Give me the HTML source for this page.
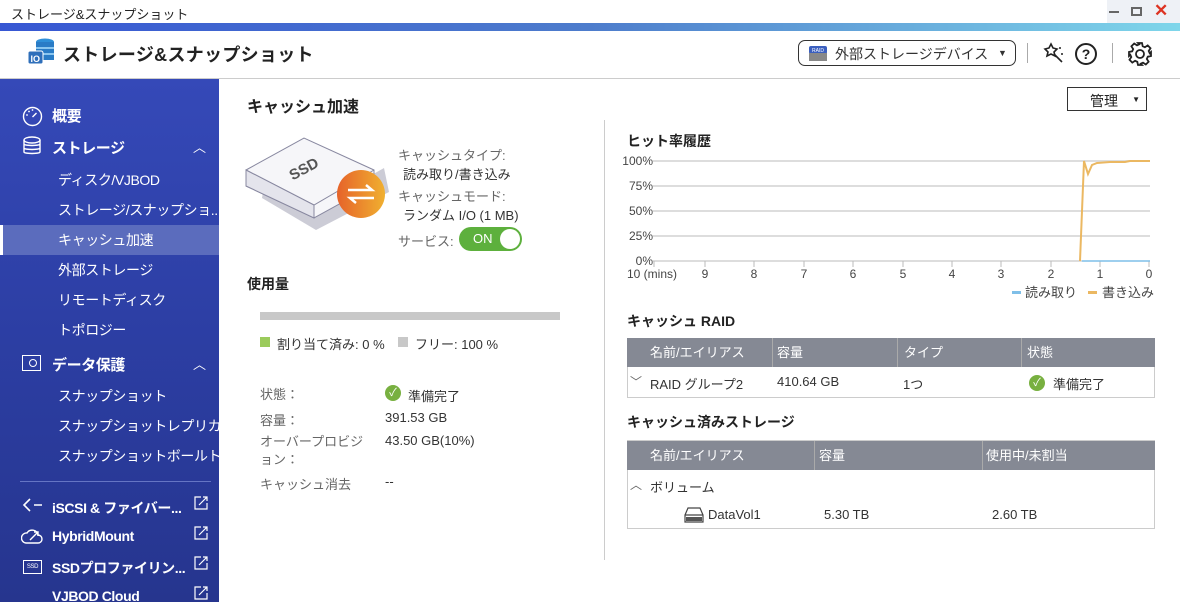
<!DOCTYPE html>
<html><head><meta charset="utf-8"><style>
*{margin:0;padding:0;box-sizing:border-box}
body{width:1180px;height:602px;overflow:hidden;background:#fff;font-family:"Liberation Sans","Noto Sans CJK JP",sans-serif;color:#222;position:relative}
.a{position:absolute;white-space:nowrap}
.side{position:absolute;left:0;top:79px;width:219px;height:523px;overflow:hidden;background:linear-gradient(180deg,#3549b8 0%,#2c3ea3 50%,#26358e 100%)}
.side .a{color:#fff;font-size:14px;letter-spacing:-0.4px}
.b{font-weight:bold;font-size:15px!important}
.th{position:absolute;background:#858994;color:#fff;font-size:13px;height:29px;line-height:29px}
.sm{font-size:13px;color:#333}
.g{color:#666}
</style></head><body>
<!-- title bar -->
<div class="a" style="left:0;top:0;width:1180px;height:23px;background:#fff"></div>
<div class="a" style="left:1107px;top:0;width:73px;height:23px;background:#eef1f6"></div>
<div class="a" style="left:11px;top:4px;font-size:13px;color:#222">ストレージ&amp;スナップショット</div>
<div class="a" style="left:1109px;top:11px;width:10px;height:2px;background:#666"></div>
<div class="a" style="left:1131px;top:7px;width:11px;height:9px;border:2px solid #666"></div>
<div class="a" style="left:1154px;top:1px;font-size:17px;color:#d32;font-weight:bold">✕</div>
<div class="a" style="left:0;top:23px;width:1180px;height:8px;background:linear-gradient(90deg,#3757d3,#4d7ccc 50%,#7fd6ea)"></div>
<!-- header -->
<div class="a" style="left:0;top:78px;width:1180px;height:1px;background:#ccc"></div>
<svg class="a" style="left:26px;top:37px" width="30" height="30" viewBox="0 0 30 30"><ellipse cx="19" cy="5" rx="9" ry="3.5" fill="#2f8fd8"/><rect x="10" y="5" width="18" height="18" fill="#2a7cc6"/><rect x="10" y="10" width="18" height="2" fill="#8bc6ef"/><rect x="10" y="16" width="18" height="2" fill="#8bc6ef"/><rect x="2" y="14" width="15" height="13" rx="2" fill="#2f6fba" stroke="#fff"/><text x="4.5" y="25" font-size="9" fill="#fff" font-family="Liberation Sans" font-weight="bold">IO</text></svg>
<div class="a" style="left:63px;top:41px;font-size:18px;color:#222;font-weight:bold;letter-spacing:.3px">ストレージ&amp;スナップショット</div>
<div class="a" style="left:798px;top:40px;width:218px;height:26px;border:1px solid #333;border-radius:7px"></div>
<svg class="a" style="left:808px;top:45px" width="20" height="17"><rect x="1" y="1" width="18" height="8" rx="2" fill="#3b5fbf"/><rect x="1" y="8" width="18" height="8" fill="#888"/><text x="4" y="7" font-size="5" fill="#fff">RAID</text></svg>
<div class="a" style="left:835px;top:44px;font-size:14px;color:#333">外部ストレージデバイス</div>
<div class="a" style="left:998px;top:48px;font-size:9px;color:#333">▼</div>
<div class="a" style="left:1027px;top:43px;width:1px;height:20px;background:#aaa"></div>
<svg class="a" style="left:1042px;top:42px" width="24" height="24"><g fill="none" stroke="#222" stroke-width="1.6"><path d="M9 2l2 4 4 1-3 3 1 4-4-2-4 2 1-4-3-3 4-1z"/><path d="M12 12l8 8"/></g><circle cx="18" cy="6" r="1" fill="#222"/><circle cx="20" cy="12" r="1" fill="#222"/></svg>
<div class="a" style="left:1075px;top:43px;width:22px;height:22px;border:2px solid #222;border-radius:50%;text-align:center;font-size:14px;font-weight:bold;line-height:18px">?</div>
<div class="a" style="left:1112px;top:43px;width:1px;height:20px;background:#aaa"></div>
<svg class="a" style="left:1127px;top:41px" width="26" height="26" viewBox="0 0 26 26"><g fill="none" stroke="#222" stroke-width="1.8"><path d="M11 2h4l.7 3.2 2.2 1 2.8-1.8 2.8 2.8-1.8 2.8 1 2.2L24 11v4l-3.2.7-1 2.2 1.8 2.8-2.8 2.8-2.8-1.8-2.2 1L15 24h-4l-.7-3.2-2.2-1-2.8 1.8-2.8-2.8 1.8-2.8-1-2.2L2 15v-4l3.2-.7 1-2.2-1.8-2.8 2.8-2.8 2.8 1.8 2.2-1z"/><circle cx="13" cy="13" r="4"/></g></svg>
<!-- sidebar -->
<div class="side">
<div class="a" style="left:0;top:146px;width:219px;height:30px;background:#5b6cbd"></div>
<div class="a" style="left:0;top:146px;width:3px;height:30px;background:#fff"></div>
<svg class="a" style="left:22px;top:27px" width="21" height="21"><g fill="none" stroke="#fff" stroke-width="1.4"><circle cx="10.5" cy="10.5" r="9"/><path d="M10.5 11l4-4"/></g><circle cx="5" cy="9" r=".9" fill="#fff"/><circle cx="7" cy="5.5" r=".9" fill="#fff"/><circle cx="10.5" cy="4" r=".9" fill="#fff"/></svg>
<div class="a b" style="left:52px;top:26px">概要</div>
<svg class="a" style="left:22px;top:57px" width="20" height="20"><g fill="none" stroke="#fff" stroke-width="1.4"><ellipse cx="10" cy="4" rx="8" ry="3"/><path d="M2 4v12c0 2 16 2 16 0V4M2 8c0 2 16 2 16 0M2 12c0 2 16 2 16 0"/></g></svg>
<div class="a b" style="left:52px;top:58px">ストレージ</div>
<div class="a" style="left:193px;top:58px;font-size:13px!important">︿</div>
<div class="a" style="left:58px;top:91px">ディスク/VJBOD</div>
<div class="a" style="left:58px;top:121px">ストレージ/スナップショ...</div>
<div class="a" style="left:58px;top:151px">キャッシュ加速</div>
<div class="a" style="left:58px;top:181px">外部ストレージ</div>
<div class="a" style="left:58px;top:211px">リモートディスク</div>
<div class="a" style="left:58px;top:241px">トポロジー</div>
<div class="a" style="left:22px;top:276px;width:19px;height:16px;border:1.3px solid #fff"></div>
<div class="a" style="left:29px;top:280px;width:8px;height:8px;border:1.3px solid #fff;border-radius:50%"></div>
<div class="a b" style="left:52px;top:275px">データ保護</div>
<div class="a" style="left:193px;top:275px;font-size:13px!important">︿</div>
<div class="a" style="left:58px;top:307px">スナップショット</div>
<div class="a" style="left:58px;top:337px">スナップショットレプリカ</div>
<div class="a" style="left:58px;top:367px">スナップショットボールト</div>
<div class="a" style="left:20px;top:402px;width:191px;height:1px;background:#6575c4"></div>
<svg class="a" style="left:22px;top:418px" width="22" height="16"><path d="M8 2L2 8l6 6M12 8h8" fill="none" stroke="#fff" stroke-width="1.6"/></svg>
<div class="a b" style="left:52px;top:419px;font-size:14px!important">iSCSI &amp; ファイバー...</div>
<svg class="a" style="left:21px;top:448px" width="24" height="18"><g fill="none" stroke="#fff" stroke-width="1.4"><path d="M5 16h12a4 4 0 0 0 0-8 6 6 0 0 0-11-2A5 5 0 0 0 5 16z"/><path d="M9 13l8-8M13 5h4v4"/></g></svg>
<div class="a b" style="left:52px;top:449px;font-size:14px!important">HybridMount</div>
<div class="a" style="left:23px;top:481px;width:19px;height:14px;border:1.2px solid #fff;font-size:6px!important;text-align:center;line-height:12px">SSD</div>
<div class="a b" style="left:52px;top:479px;font-size:14px!important">SSDプロファイリン...</div>
<div class="a b" style="left:52px;top:509px;font-size:14px!important">VJBOD Cloud</div>
<svg class="a" style="left:194px;top:417px" width="14" height="104"><g fill="none" stroke="#fff" stroke-width="1.2"><path d="M7 1H1v12h12V7M5 9l8-8M9 1h4v4"/><path d="M7 31H1v12h12V37M5 39l8-8M9 31h4v4"/><path d="M7 61H1v12h12V67M5 69l8-8M9 61h4v4"/><path d="M7 91H1v12h12V97M5 99l8-8M9 91h4v4"/></g></svg>
</div>
<!-- content -->
<div class="a" style="left:247px;top:93px;font-size:16px;font-weight:bold">キャッシュ加速</div>
<div class="a" style="left:1067px;top:87px;width:80px;height:24px;border:1px solid #333;font-size:14px;padding:3px 0 0 22px">管理<span style="font-size:8px;position:absolute;right:6px;top:7px">▼</span></div>
<!-- ssd -->
<svg class="a" style="left:244px;top:130px" width="145" height="100"><defs><linearGradient id="og" x1="0" x2="1"><stop offset="0" stop-color="#e6632a"/><stop offset="1" stop-color="#f0b030"/></linearGradient></defs><polygon points="18,68 72,100 145,62 140,38 80,72 22,44" fill="#ccccd6"/><polygon points="2,40 60,8 130,40 130,55 70,88 2,56" fill="#f6f6f9" stroke="#8888a0"/><polyline points="2,40 70,75 130,40" fill="none" stroke="#8888a0"/><polygon points="2,40 70,75 70,88 2,56" fill="#e4e4ec" stroke="#8888a0"/><text x="45" y="44" font-size="15" font-weight="bold" fill="#555" transform="rotate(-28 60 40)" font-family="Liberation Sans">SSD</text><circle cx="117" cy="64" r="24" fill="url(#og)"/><path d="M104 60h24l-6-5M130 68h-24l6 5" stroke="#fff" stroke-width="2.5" fill="none"/></svg>
<div class="a g" style="left:398px;top:145px;font-size:13px">キャッシュタイプ:</div>
<div class="a sm" style="left:403px;top:164px">読み取り/書き込み</div>
<div class="a g" style="left:398px;top:186px;font-size:13px">キャッシュモード:</div>
<div class="a sm" style="left:403px;top:205px">ランダム I/O (1 MB)</div>
<div class="a g" style="left:398px;top:231px;font-size:13px">サービス:</div>
<div class="a" style="left:459px;top:227px;width:63px;height:24px;background:#5db03d;border-radius:12px;color:#fff;font-size:13px;padding:4px 0 0 14px">ON<div style="position:absolute;right:2px;top:2px;width:20px;height:20px;background:#fff;border-radius:50%"></div></div>
<div class="a" style="left:247px;top:274px;font-size:14px;font-weight:bold">使用量</div>
<div class="a" style="left:260px;top:312px;width:300px;height:8px;background:#c8c8c8"></div>
<div class="a" style="left:260px;top:337px;width:10px;height:10px;background:#9bcb5c"></div>
<div class="a sm" style="left:277px;top:334px">割り当て済み: 0 %</div>
<div class="a" style="left:398px;top:337px;width:10px;height:10px;background:#c8c8c8"></div>
<div class="a sm" style="left:415px;top:334px">フリー: 100 %</div>
<div class="a g" style="left:260px;top:384px;font-size:13px">状態：</div>
<div class="a" style="left:385px;top:385px;width:16px;height:16px;background:#78b040;border-radius:50%;color:#fff;font-size:11px;text-align:center;line-height:16px">✓</div>
<div class="a sm" style="left:408px;top:386px">準備完了</div>
<div class="a g" style="left:260px;top:410px;font-size:13px">容量：</div>
<div class="a sm" style="left:385px;top:410px">391.53 GB</div>
<div class="a g" style="left:260px;top:433px;font-size:13px;line-height:18px">オーバープロビジ<br>ョン：</div>
<div class="a sm" style="left:385px;top:433px">43.50 GB(10%)</div>
<div class="a g" style="left:260px;top:474px;font-size:13px">キャッシュ消去</div>
<div class="a sm" style="left:385px;top:474px">--</div>
<div class="a" style="left:604px;top:120px;width:1px;height:440px;background:#ccc"></div>
<!-- chart -->
<div class="a" style="left:627px;top:131px;font-size:14px;font-weight:bold">ヒット率履歴</div>
<svg class="a" style="left:620px;top:150px" width="560" height="155" font-family="Liberation Sans" font-size="12" fill="#444">
<g stroke="#ddd" stroke-width="2"><line x1="33" y1="11" x2="530" y2="11"/><line x1="33" y1="36" x2="530" y2="36"/><line x1="33" y1="61" x2="530" y2="61"/><line x1="33" y1="86" x2="530" y2="86"/></g>
<line x1="33" y1="111" x2="530" y2="111" stroke="#bbb"/>
<g text-anchor="end"><text x="33" y="15">100%</text><text x="33" y="40">75%</text><text x="33" y="65">50%</text><text x="33" y="90">25%</text><text x="33" y="115">0%</text></g>
<g stroke="#bbb"><line x1="34" y1="111" x2="34" y2="117"/><line x1="85" y1="111" x2="85" y2="117"/><line x1="134" y1="111" x2="134" y2="117"/><line x1="184" y1="111" x2="184" y2="117"/><line x1="233" y1="111" x2="233" y2="117"/><line x1="283" y1="111" x2="283" y2="117"/><line x1="332" y1="111" x2="332" y2="117"/><line x1="381" y1="111" x2="381" y2="117"/><line x1="431" y1="111" x2="431" y2="117"/><line x1="480" y1="111" x2="480" y2="117"/><line x1="529" y1="111" x2="529" y2="117"/></g>
<g text-anchor="middle"><text x="32" y="128">10 (mins)</text><text x="85" y="128">9</text><text x="134" y="128">8</text><text x="184" y="128">7</text><text x="233" y="128">6</text><text x="283" y="128">5</text><text x="332" y="128">4</text><text x="381" y="128">3</text><text x="431" y="128">2</text><text x="480" y="128">1</text><text x="529" y="128">0</text></g>
<line x1="462" y1="111" x2="530" y2="111" stroke="#7fbfe8" stroke-width="1.5"/>
<polyline points="460,111 464,11 468,24 472,15 477,13 490,12 505,12 510,11 530,11" fill="none" stroke="#ebb862" stroke-width="2"/>
<rect x="392" y="141" width="9" height="3" fill="#7fbfe8"/><text x="405" y="147" font-size="13">読み取り</text>
<rect x="468" y="141" width="9" height="3" fill="#ebb862"/><text x="482" y="147" font-size="13">書き込み</text>
</svg>
<!-- RAID table -->
<div class="a" style="left:627px;top:311px;font-size:14px;font-weight:bold">キャッシュ RAID</div>
<div class="a" style="left:627px;top:338px;width:528px;height:60px;border:1px solid #ccc"></div>
<div class="th" style="left:627px;top:338px;width:528px"></div>
<div class="a" style="left:627px;top:338px;width:528px;height:29px;color:#fff;font-size:13px;line-height:29px"><span class="a" style="left:23px">名前/エイリアス</span><span class="a" style="left:150px">容量</span><span class="a" style="left:277px">タイプ</span><span class="a" style="left:400px">状態</span></div>
<div class="a" style="left:772px;top:338px;width:1px;height:29px;background:#aaa"></div>
<div class="a" style="left:897px;top:338px;width:1px;height:29px;background:#aaa"></div>
<div class="a" style="left:1021px;top:338px;width:1px;height:29px;background:#aaa"></div>
<div class="a g" style="left:630px;top:373px;font-size:12px">﹀</div>
<div class="a sm" style="left:650px;top:374px">RAID グループ2</div>
<div class="a sm" style="left:777px;top:374px">410.64 GB</div>
<div class="a sm" style="left:903px;top:374px">1つ</div>
<div class="a" style="left:1029px;top:375px;width:16px;height:16px;background:#78b040;border-radius:50%;color:#fff;font-size:11px;text-align:center;line-height:16px">✓</div>
<div class="a sm" style="left:1053px;top:374px">準備完了</div>
<!-- cached table -->
<div class="a" style="left:627px;top:412px;font-size:14px;font-weight:bold">キャッシュ済みストレージ</div>
<div class="a" style="left:627px;top:440px;width:528px;height:89px;border:1px solid #ccc"></div>
<div class="th" style="left:627px;top:441px;width:528px"></div>
<div class="a" style="left:627px;top:441px;width:528px;height:29px;color:#fff;font-size:13px;line-height:29px"><span class="a" style="left:23px">名前/エイリアス</span><span class="a" style="left:192px">容量</span><span class="a" style="left:359px">使用中/未割当</span></div>
<div class="a" style="left:814px;top:441px;width:1px;height:29px;background:#aaa"></div>
<div class="a" style="left:982px;top:441px;width:1px;height:29px;background:#aaa"></div>
<div class="a g" style="left:630px;top:476px;font-size:12px">︿</div>
<div class="a sm" style="left:650px;top:477px">ボリューム</div>
<svg class="a" style="left:684px;top:507px" width="20" height="16"><path d="M4 1h12l3 7v7H1V8z M1 8h18" fill="none" stroke="#444" stroke-width="1.2"/><rect x="2" y="10" width="16" height="4" fill="#555"/></svg>
<div class="a sm" style="left:708px;top:507px">DataVol1</div>
<div class="a sm" style="left:824px;top:507px">5.30 TB</div>
<div class="a sm" style="left:992px;top:507px">2.60 TB</div>
</body></html>
